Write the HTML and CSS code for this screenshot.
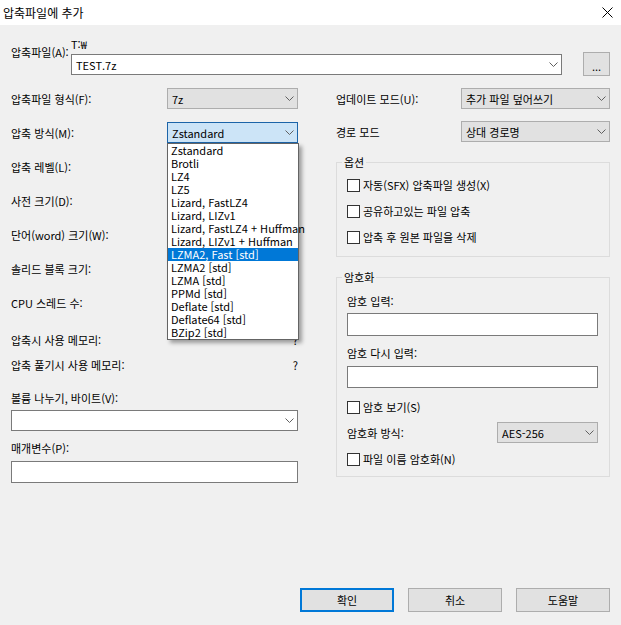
FILE: index.html
```html
<!DOCTYPE html>
<html lang="ko">
<head>
    <meta charset="UTF-8">
    <title>압축파일에 추가</title>
    <link rel="stylesheet" href="styles.css">
</head>
<body>
    <div class="titlebar">
        <span class="title">압축파일에 추가</span>
        <svg class="close" width="11" height="11" viewBox="0 0 11 11"><path d="M0.5 0.5 L10.5 10.5 M10.5 0.5 L0.5 10.5" stroke="#000" stroke-width="1"/></svg>
    </div>

    <div class="dialog">
        <!-- archive name -->
        <div class="archive">
            <label class="archive-label">압축파일(A):</label>
            <div class="archive-path">
                <div class="path-prefix">T:₩</div>
                <div class="combo edit">
                    <span>TEST.7z</span>
                    <svg class="chevron" width="9" height="5"><polyline points="0.5,0.5 4.5,4.5 8.5,0.5" fill="none" stroke="#606060"/></svg>
                </div>
            </div>
            <button class="browse">...</button>
        </div>

        <div class="columns">
            <div class="col-left">
                <div class="fields">
                    <div class="row">
                        <span class="row-label">압축파일 형식(F):</span>
                        <div class="combo">
                            <span>7z</span>
                            <svg class="chevron" width="9" height="5"><polyline points="0.5,0.5 4.5,4.5 8.5,0.5" fill="none" stroke="#606060"/></svg>
                        </div>
                    </div>
                    <div class="row">
                        <span class="row-label">압축 방식(M):</span>
                        <div class="combo open">
                            <span>Zstandard</span>
                            <svg class="chevron" width="9" height="5"><polyline points="0.5,0.5 4.5,4.5 8.5,0.5" fill="none" stroke="#606060"/></svg>
                            <ul class="dropdown">
                                <li>Zstandard</li>
                                <li>Brotli</li>
                                <li>LZ4</li>
                                <li>LZ5</li>
                                <li>Lizard, FastLZ4</li>
                                <li>Lizard, LIZv1</li>
                                <li>Lizard, FastLZ4 + Huffman</li>
                                <li>Lizard, LIZv1 + Huffman</li>
                                <li class="selected">LZMA2, Fast [std]</li>
                                <li>LZMA2 [std]</li>
                                <li>LZMA [std]</li>
                                <li>PPMd [std]</li>
                                <li>Deflate [std]</li>
                                <li>Deflate64 [std]</li>
                                <li>BZip2 [std]</li>
                            </ul>
                        </div>
                    </div>
                    <div class="row"><span class="row-label">압축 레벨(L):</span></div>
                    <div class="row"><span class="row-label">사전 크기(D):</span></div>
                    <div class="row"><span class="row-label">단어(word) 크기(W):</span></div>
                    <div class="row"><span class="row-label">솔리드 블록 크기:</span></div>
                    <div class="row"><span class="row-label">CPU 스레드 수:</span></div>
                </div>

                <div class="memory">
                    <div class="mem-row"><span>압축시 사용 메모리:</span><span>?</span></div>
                    <div class="mem-row"><span>압축 풀기시 사용 메모리:</span><span>?</span></div>
                </div>

                <div class="field-label volume-label">볼륨 나누기, 바이트(V):</div>
                <div class="combo edit volume">
                    <span></span>
                    <svg class="chevron" width="9" height="5"><polyline points="0.5,0.5 4.5,4.5 8.5,0.5" fill="none" stroke="#606060"/></svg>
                </div>

                <div class="field-label params-label">매개변수(P):</div>
                <input class="text-input params" type="text">
            </div>

            <div class="col-right">
                <div class="fields right-fields">
                    <div class="row">
                        <span class="row-label">업데이트 모드(U):</span>
                        <div class="combo">
                            <span>추가 파일 덮어쓰기</span>
                            <svg class="chevron" width="9" height="5"><polyline points="0.5,0.5 4.5,4.5 8.5,0.5" fill="none" stroke="#606060"/></svg>
                        </div>
                    </div>
                    <div class="row">
                        <span class="row-label">경로 모드</span>
                        <div class="combo">
                            <span>상대 경로명</span>
                            <svg class="chevron" width="9" height="5"><polyline points="0.5,0.5 4.5,4.5 8.5,0.5" fill="none" stroke="#606060"/></svg>
                        </div>
                    </div>
                </div>

                <fieldset class="group options">
                    <legend>옵션</legend>
                    <div class="check-row"><span class="check"></span>자동(SFX) 압축파일 생성(X)</div>
                    <div class="check-row"><span class="check"></span>공유하고있는 파일 압축</div>
                    <div class="check-row"><span class="check"></span>압축 후 원본 파일을 삭제</div>
                </fieldset>

                <fieldset class="group encryption">
                    <legend>암호화</legend>
                    <div class="field-label">암호 입력:</div>
                    <input class="text-input pass" type="text">
                    <div class="field-label pass2-label">암호 다시 입력:</div>
                    <input class="text-input pass2" type="text">
                    <div class="check-row show-pass"><span class="check"></span>암호 보기(S)</div>
                    <div class="enc-method">
                        <span>암호화 방식:</span>
                        <div class="combo">
                            <span>AES-256</span>
                            <svg class="chevron" width="9" height="5"><polyline points="0.5,0.5 4.5,4.5 8.5,0.5" fill="none" stroke="#606060"/></svg>
                        </div>
                    </div>
                    <div class="check-row enc-names"><span class="check"></span>파일 이름 암호화(N)</div>
                </fieldset>
            </div>
        </div>

        <div class="buttons">
            <button class="btn default">확인</button>
            <button class="btn">취소</button>
            <button class="btn">도움말</button>
        </div>
    </div>
</body>
</html>
```

FILE: styles.css
```css
* {
    margin: 0;
    padding: 0;
    box-sizing: border-box;
}

body {
    font-family: "Noto Sans CJK KR", sans-serif;
    font-size: 11px;
    line-height: 16px;
    color: #000;
    background-color: #f0f0f0;
    width: 621px;
    height: 625px;
    overflow: hidden;
}

.titlebar {
    height: 25px;
    background-color: #fff;
    display: flex;
    align-items: center;
    justify-content: space-between;
    padding: 0 8px 0 3px;
}

.title {
    font-size: 12px;
}

.dialog {
    height: 600px;
    display: flex;
    flex-direction: column;
    padding: 12px 11px 13px 11px;
}

/* archive name row */
.archive {
    display: flex;
    align-items: flex-start;
}

.archive-label {
    width: 60px;
    padding-top: 7px;
}

.archive-path {
    width: 491px;
}

.path-prefix {
    line-height: 14px;
    margin-bottom: 3px;
}

.browse {
    width: 27px;
    height: 24px;
    margin-left: 21px;
    margin-top: 15px;
    border: 1px solid #adadad;
    background-color: #e1e1e1;
    font-family: inherit;
    font-size: 11px;
    line-height: 14px;
    padding-top: 4px;
}

/* combo boxes */
.combo {
    position: relative;
    height: 21px;
    border: 1px solid #adadad;
    background-color: #e1e1e1;
    display: flex;
    align-items: center;
    justify-content: space-between;
    padding: 0 3px 0 4px;
    white-space: nowrap;
}

.combo.edit {
    background-color: #fff;
    border-color: #7a7a7a;
}

.combo.open {
    background-color: #cce4f7;
    border-color: #1c64a8;
}

.chevron {
    flex-shrink: 0;
}

.dropdown {
    position: absolute;
    top: calc(100% + 1px);
    left: -1px;
    width: 132px;
    list-style: none;
    background-color: #fff;
    border: 1px solid #646464;
    box-shadow: 3px 3px 4px rgba(0, 0, 0, 0.35);
    z-index: 10;
}

.dropdown li {
    line-height: 13px;
    height: 13px;
    padding-left: 3px;
}

.dropdown li.selected {
    background-color: #0078d7;
    color: #fff;
}

.columns {
    display: flex;
    gap: 38px;
    margin-top: 12px;
}

.col-left {
    width: 287px;
    display: flex;
    flex-direction: column;
}

.col-right {
    width: 274px;
    display: flex;
    flex-direction: column;
}

.fields {
    display: flex;
    flex-direction: column;
    gap: 13px;
}

.right-fields {
    gap: 12px;
}

.row {
    height: 21px;
    display: flex;
    align-items: center;
}

.row-label {
    width: 156px;
    flex-shrink: 0;
}

.row .combo {
    width: 131px;
}

.right-fields .row-label {
    width: 125px;
}

.right-fields .row .combo {
    width: 149px;
}

.memory {
    margin-top: 19px;
    display: flex;
    flex-direction: column;
    gap: 9px;
}

.mem-row {
    display: flex;
    justify-content: space-between;
}

.volume-label {
    margin-top: 17px;
}

.volume {
    margin-top: 4px;
}

.params-label {
    margin-top: 9px;
}

.text-input {
    display: block;
    width: 100%;
    height: 22px;
    border: 1px solid #7a7a7a;
    background-color: #fff;
    outline: none;
}

.params {
    margin-top: 5px;
}

/* group boxes */
.group {
    border: 1px solid #dcdcdc;
    padding: 0 11px 0 10px;
    margin: 0;
}

.group legend {
    padding: 0 2px;
    margin-left: -5px;
    line-height: 16px;
}

.options {
    margin-top: 12px;
    padding-top: 7px;
    padding-bottom: 11px;
    display: flex;
    flex-direction: column;
    gap: 10px;
}

.encryption {
    margin-top: 12px;
    padding-top: 8px;
    padding-bottom: 9px;
}

.check-row {
    display: flex;
    align-items: center;
    height: 16px;
}

.check {
    width: 13px;
    height: 13px;
    border: 1px solid #333;
    background-color: #fff;
    margin-right: 3px;
}

.pass {
    height: 23px;
    margin-top: 4px;
}

.pass2-label {
    margin-top: 9px;
}

.pass2 {
    margin-top: 5px;
}

.show-pass {
    margin-top: 11px;
}

.enc-method {
    display: flex;
    align-items: center;
    justify-content: space-between;
    margin-top: 7px;
}

.enc-method .combo {
    width: 101px;
}

.enc-names {
    margin-top: 8px;
}

/* bottom buttons */
.buttons {
    margin-top: auto;
    display: flex;
    justify-content: flex-end;
    gap: 14px;
}

.btn {
    width: 94px;
    height: 24px;
    border: 1px solid #adadad;
    background-color: #e1e1e1;
    font-family: inherit;
    font-size: 11px;
    color: #000;
}

.btn.default {
    border: 2px solid #0078d7;
}
```
